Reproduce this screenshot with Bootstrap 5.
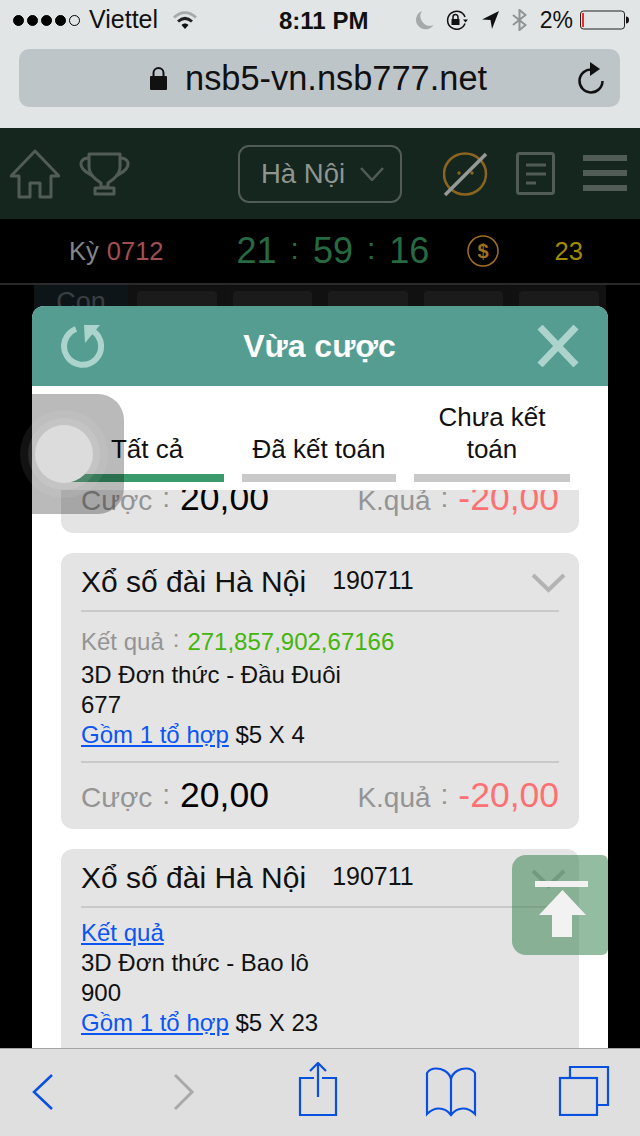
<!DOCTYPE html>
<html lang="vi">

<head>
  <meta charset="UTF-8">
  <meta name="viewport" content="width=device-width, initial-scale=1.0">
  <title>Vừa cược</title>
  <link href="https://cdn.jsdelivr.net/npm/bootstrap@5.3.6/dist/css/bootstrap.min.css" rel="stylesheet">
  <style>
    html, body { margin: 0; background: #000; }
    body, button { font-family: "Liberation Sans", Arial, sans-serif; }

    #phone { position: relative; width: 640px; height: 1136px; overflow: hidden; background: #000; }

    /* safari chrome */
    #chrome { height: 128px; background: #e1e5e5; flex: none; }
    #statusbar { height: 40px; padding: 0 11px 0 13px; font-size: 23px; color: #111; }
    .sig-dot { width: 11px; height: 11px; border-radius: 50%; background: #000; border: 1px solid #000; margin-right: 3px; }
    .sig-dot.off { background: transparent; }
    .carrier { margin-left: 6px; width: 83px; font-size: 25px; }
    .clock { font-weight: bold; position: absolute; left: 279px; top: 8px; font-size: 24px; line-height: 26px; }
    .pct { margin: 0 7px 0 13px; }
    .st-moon { margin-right: 11px; }
    .st-gap { margin-right: 12px; }
    #urlbar { margin: 9px 20px 0 19px; height: 58px; background: #bec5c9; border-radius: 10px; padding-left: 131px; padding-right: 15px; }
    .url-text { font-size: 34.4px; color: #111; margin-left: 18px; line-height: 58px; }

    /* app nav */
    #appnav { height: 91px; background: #14261d; flex: none; padding-left: 10px; }
    .city-box { margin-left: 108px; margin-right: 41px; width: 164px; height: 58px; border: 2px solid #525c57; border-radius: 11px; color: #8f9591; font-size: 27.5px; padding-left: 21px; flex: none; }
    .city-box svg { margin-left: 15px; }
    .ic-doc { margin: 0 28px 0 27px; }
    .ic-cup { margin-left: 19px; }
    .ic-menu { margin-bottom: 2px; }

    /* timer */
    #timerbar { height: 66px; background: #000; border-bottom: 2px solid #2b2b2b; flex: none; font-size: 25.5px; padding-left: 69px; }
    .ky { color: #868686; }
    .ky-no { color: #a04f50; margin-left: 8px; }
    .count { color: #266a42; font-size: 36px; margin-left: 73px; width: 195px; }
    .count-sep { position: relative; top: -4px; font-size: 30px; margin: 0 14px; }
    .coin { margin-left: 35px; }
    .credit { color: #a08c00; margin-left: 56px; }

    /* what shows behind the popup */
    #backrow { margin-left: 34px; width: 572px; height: 60px; background: #101010; gap: 2px; flex: none; }
    .back-cell { flex: 1; padding: 6px 7px 0; background: #111; }
    .back-cell span { display: block; height: 40px; background: #1b1b1b; border-radius: 4px; }
    .back-con { flex: none; width: 94px; background: #0e1518; color: #3a3f42; font-size: 27px; text-align: center; line-height: 30px; padding-top: 2px; }

    /* popup */
    #popup { position: absolute; left: 32px; top: 306px; width: 576px; height: 742px; background: #fff; border-radius: 12px 12px 0 0; overflow: hidden; }
    .popup-head { height: 80px; background: #549d90; padding: 0 29px 0 28px; color: #fff; }
    .popup-title { font-size: 32px; font-weight: bold; margin-right: 4px; }
    .tab-row { height: 104px; padding: 0 38px; gap: 18px; }
    .tab-item { width: 154px; font-size: 26px; line-height: 32px; color: #111; text-align: center; padding-bottom: 9px; border-bottom: 8px solid #c9c9c9; margin-bottom: 8px; }
    .tab-item.on { border-bottom-color: #3b9a6b; }
    .tab-item.wide { width: 156px; }
    .bet-list { height: 558px; overflow: hidden; padding: 0 29px; }
    .bet-card { background: #e4e4e4; border: 0; border-radius: 12px; margin-bottom: 20px; padding: 0 20px; color: #111; }
    .bet-card.scrolled { margin-top: -25px; }
    .bet-top { height: 59px; border-bottom: 2px solid #c9c9c9; font-size: 30px; padding-bottom: 1px; }
    .draw-no { font-size: 25px; margin-left: 26px; }
    .bet-top svg { position: absolute; right: 13px; top: 20px; }
    .bet-body { font-size: 24px; line-height: 30px; padding: 12px 0 11px; }
    .bet-body.plain { padding: 10px 0 30px; }
    .bet-body a { color: #0b55f5; }
    .line-first { line-height: 36px; }
    .grey-label { color: #949494; }
    .colon { position: relative; top: -3px; }
    .line-first .colon { margin: 0 8px 0 9px; }
    .win-no { color: #43b50c; }
    .bet-foot { height: 68px; border-top: 2px solid #c9c9c9; font-size: 28px; }
    .bet-card.scrolled .bet-foot { border-top: 0; }
    .big-val { font-size: 35.5px; color: #000; }
    .big-val.lose { color: #ff7073; }
    .bet-foot .colon { margin: 0 10px; }

    /* floating stuff */
    #assist { position: absolute; left: 4px; top: 394px; width: 120px; height: 120px; background: rgba(0, 0, 0, .27); border-radius: 26px; }
    #assist svg { position: absolute; left: 0; top: 0; }
    #totop { position: absolute; left: 512px; top: 855px; width: 96px; height: 100px; background: rgba(60, 133, 82, .55); border-radius: 14px 6px 6px 14px; }

    /* safari toolbar */
    #toolbar { position: relative; height: 88px; background: #dfdfdf; border-top: 1px solid #a5a5a5; flex: none; margin-top: auto; }
    #toolbar svg { position: absolute; }
    .tb-back { left: 31px; top: 24px; }
    .tb-next { left: 172px; top: 24px; }
    .tb-share { left: 298px; top: 13px; }
    .tb-book { left: 425px; top: 18px; }
    .tb-tabs { left: 558px; top: 17px; }
  </style>
</head>

<body>
  <div id="phone" class="d-flex flex-column">

    <!-- thanh trang thai + dia chi -->
    <div id="chrome">
      <div id="statusbar" class="d-flex align-items-center">
        <span class="sig-dot"></span><span class="sig-dot"></span><span class="sig-dot"></span><span class="sig-dot"></span><span class="sig-dot off"></span>
        <span class="carrier">Viettel</span>
        <svg width="26" height="20" viewBox="0 0 26 20" fill="none">
          <path d="M2 7.500C9 1 17 1 24 7.500" stroke="#a9abab" stroke-width="3"/>
          <path d="M6 11.500C10.500 7.500 15.500 7.500 20 11.500" stroke="#222" stroke-width="3"/>
          <path d="M9.500 15C11.500 13 14.500 13 16.500 15L13 19Z" fill="#111"/>
        </svg>
        <span class="clock">8:11 PM</span>
        <div class="ms-auto d-flex align-items-center">
          <svg class="st-moon" width="19" height="20" viewBox="0 0 19 20"><path d="M7 1A9.500 9.500 0 1 0 18.500 15 9.500 9.500 0 0 1 7 1Z" fill="#a6a9a9"/></svg>
          <svg class="st-gap" width="24" height="20" viewBox="0 0 24 20" fill="none">
            <path d="M20 13.500A9 9 0 1 1 20 7" stroke="#111" stroke-width="1.500"/>
            <path d="M18 9.500h5l-2.500 3z" fill="#111"/>
            <rect x="6.500" y="9" width="8" height="6" fill="#111"/>
            <path d="M8 9V7a2.500 2.500 0 0 1 5 0v2" stroke="#111" stroke-width="1.500"/>
          </svg>
          <svg class="st-gap" width="19" height="20" viewBox="0 0 19 20"><path d="M18 1 1 9.500 9.500 10 11 19Z" fill="#111"/></svg>
          <svg width="15" height="22" viewBox="0 0 15 22" fill="none"><path d="M1 6 13.500 16 7.500 21V1L13.500 6 1 16" stroke="#8f9393" stroke-width="2"/></svg>
          <span class="pct">2%</span>
          <svg width="49" height="20" viewBox="0 0 49 20" fill="none">
            <rect x=".5" y="1" width="44" height="18" rx="3" stroke="#222"/>
            <rect x="2" y="3" width="2" height="14" fill="#f02a2a"/>
            <path d="M46 6.500c2 0 3 1.500 3 3.500s-1 3.500-3 3.500z" fill="#111"/>
          </svg>
        </div>
      </div>
      <div id="urlbar" class="d-flex align-items-center">
        <svg width="17" height="23" viewBox="0 0 17 23" fill="none">
          <rect x="0" y="9" width="17" height="14" rx="1" fill="#111"/>
          <path d="M3.500 10V6a5 5 0 0 1 10 0v4" stroke="#111" stroke-width="2"/>
        </svg>
        <span class="url-text">nsb5-vn.nsb777.net</span>
        <svg class="ms-auto" width="28" height="32" viewBox="0 0 28 32" fill="none">
          <path d="M15 7.500A11.500 11.500 0 1 0 25.500 19" stroke="#111" stroke-width="2.500"/>
          <path d="M13 0 23 7 13 14Z" fill="#111"/>
        </svg>
      </div>
    </div>

    <!-- menu cua app -->
    <div id="appnav" class="d-flex align-items-center">
      <svg width="50" height="50" viewBox="0 0 50 50" fill="none" stroke="#525c57" stroke-width="3" stroke-linejoin="round">
        <path d="M25 2 49 27H41V48H30V34H20V48H9V27H1Z"/>
      </svg>
      <svg class="ic-cup" width="51" height="44" viewBox="0 0 51 44" fill="none" stroke="#525c57" stroke-width="3" stroke-linejoin="round">
        <path d="M10 2H41V14C41 24 33 28 29 31V35H22V31C18 28 10 24 10 14Z"/>
        <path d="M10 6C2 6 0 12 4 17 7 21 11 22 14 24M41 6C49 6 51 12 47 17 44 21 40 22 37 24"/>
        <rect x="16" y="36" width="19" height="6"/>
      </svg>
      <div class="city-box d-flex align-items-center">
        <span>Hà Nội</span>
        <svg width="24" height="14" viewBox="0 0 24 14" fill="none"><path d="M1 1 12 13 23 1" stroke="#525c57" stroke-width="2.500"/></svg>
      </div>
      <svg width="46" height="46" viewBox="0 0 46 46" fill="none">
        <ellipse cx="22" cy="23" rx="21" ry="20.500" stroke="#8a6420" stroke-width="2.500"/>
        <circle cx="16" cy="22" r="1.700" fill="#8a6420"/><circle cx="29" cy="22" r="1.700" fill="#8a6420"/>
        <path d="M2 44 43 3" stroke="#979997" stroke-width="3.500"/>
      </svg>
      <svg class="ic-doc" width="39" height="43" viewBox="0 0 39 43" fill="none" stroke="#525c57" stroke-width="3">
        <rect x="1.500" y="1.500" width="36" height="40" rx="2"/>
        <path d="M10 13H30M10 22H30M10 31H20"/>
      </svg>
      <svg class="ic-menu" width="44" height="36" viewBox="0 0 44 36" fill="#525c57">
        <rect width="44" height="6"/><rect y="15" width="44" height="6"/><rect y="30" width="44" height="6"/>
      </svg>
    </div>

    <!-- ky + dong ho -->
    <div id="timerbar" class="d-flex align-items-center">
      <span class="ky">Kỳ</span><span class="ky-no">0712</span>
      <span class="count text-nowrap">21<span class="count-sep">:</span>59<span class="count-sep">:</span>16</span>
      <svg class="coin" width="32" height="32" viewBox="0 0 32 32" fill="none">
        <circle cx="16" cy="16" r="15" stroke="#a2701c" stroke-width="1.500"/>
        <text x="16" y="23" text-anchor="middle" font-size="20" font-weight="bold" fill="#a2701c" font-family="Liberation Sans">$</text>
      </svg>
      <span class="credit">23</span>
    </div>

    <div id="backrow" class="d-flex">
      <div class="back-con">Con</div>
      <div class="back-cell"><span></span></div>
      <div class="back-cell"><span></span></div>
      <div class="back-cell"><span></span></div>
      <div class="back-cell"><span></span></div>
      <div class="back-cell"><span></span></div>
    </div>

    <!-- popup vua cuoc -->
    <div id="popup">
      <div class="popup-head d-flex align-items-center justify-content-between">
        <svg width="46" height="46" viewBox="0 0 46 46" fill="none">
          <path d="M16 6A18.500 18.500 0 1 0 33 8" stroke="#acd3cc" stroke-width="6"/>
          <path d="M24 2H40L25 20Z" fill="#acd3cc"/>
        </svg>
        <span class="popup-title">Vừa cược</span>
        <svg width="42" height="42" viewBox="0 0 42 42"><path d="M3 2 39 40M39 2 3 40" stroke="#acd3cc" stroke-width="7"/></svg>
      </div>

      <div class="tab-row d-flex align-items-end">
        <div class="tab-item on">Tất cả</div>
        <div class="tab-item">Đã kết toán</div>
        <div class="tab-item wide">Chưa kết toán</div>
      </div>

      <div class="bet-list">
        <div class="card bet-card scrolled">
          <div class="bet-foot d-flex align-items-center justify-content-between">
            <span><span class="grey-label">Cược<span class="colon">:</span></span><span class="big-val">20,00</span></span>
            <span><span class="grey-label">K.quả<span class="colon">:</span></span><span class="big-val lose">-20,00</span></span>
          </div>
        </div>

        <div class="card bet-card">
          <div class="bet-top d-flex align-items-center">
            <span>Xổ số đài Hà Nội</span><span class="draw-no">190711</span>
            <svg width="35" height="20" viewBox="0 0 35 20" fill="none"><path d="M2 2 17.500 17 33 2" stroke="#b3b3b3" stroke-width="4"/></svg>
          </div>
          <div class="bet-body">
            <div class="line-first"><span class="grey-label">Kết quả<span class="colon">:</span></span><span class="win-no">271,857,902,67166</span></div>
            <div>3D Đơn thức - Đầu Đuôi</div>
            <div>677</div>
            <div><a href="#">Gồm 1 tổ hợp</a> $5 X 4</div>
          </div>
          <div class="bet-foot d-flex align-items-center justify-content-between">
            <span><span class="grey-label">Cược<span class="colon">:</span></span><span class="big-val">20,00</span></span>
            <span><span class="grey-label">K.quả<span class="colon">:</span></span><span class="big-val lose">-20,00</span></span>
          </div>
        </div>

        <div class="card bet-card">
          <div class="bet-top d-flex align-items-center">
            <span>Xổ số đài Hà Nội</span><span class="draw-no">190711</span>
            <svg width="35" height="20" viewBox="0 0 35 20" fill="none"><path d="M2 2 17.500 17 33 2" stroke="#b3b3b3" stroke-width="4"/></svg>
          </div>
          <div class="bet-body plain">
            <div><a href="#">Kết quả</a></div>
            <div>3D Đơn thức - Bao lô</div>
            <div>900</div>
            <div><a href="#">Gồm 1 tổ hợp</a> $5 X 23</div>
          </div>
        </div>
      </div>
    </div>

    <!-- nut noi -->
    <div id="assist">
      <svg width="120" height="120" viewBox="0 0 120 120" fill="none">
        <circle cx="60" cy="60" r="44" fill="rgba(255,255,255,.07)"/>
        <circle cx="60" cy="60" r="36" fill="rgba(255,255,255,.1)"/>
        <circle cx="60" cy="60" r="29" fill="#dcdcdc"/>
      </svg>
    </div>
    <div id="totop">
      <svg width="96" height="100" viewBox="0 0 96 100" fill="#f2f2f2">
        <rect x="23" y="26" width="53" height="6"/>
        <path d="M50.500 35 74 60H60V82H40V60H27Z"/>
      </svg>
    </div>

    <!-- thanh duoi safari -->
    <div id="toolbar">
      <svg class="tb-back" width="24" height="38" viewBox="0 0 24 38" fill="none"><path d="M21 2 3 19 21 36" stroke="#0a50e0" stroke-width="2.500"/></svg>
      <svg class="tb-next" width="24" height="38" viewBox="0 0 24 38" fill="none"><path d="M3 2 20 19 3 36" stroke="#a9a9a9" stroke-width="3"/></svg>
      <svg class="tb-share" width="40" height="56" viewBox="0 0 40 56" fill="none" stroke="#0a50e0" stroke-width="2.200">
        <path d="M16 16H2V53H38V16H24M20 35V1M12 9 20 1 28 9"/>
      </svg>
      <svg class="tb-book" width="52" height="50" viewBox="0 0 52 50" fill="none" stroke="#0a50e0" stroke-width="2.200">
        <path d="M26 48V12C24 4 16 1.500 11 1.500 7 1.500 4 3 2 6V47C6 43 10 41.500 14 41.500 19 41.500 23 44 26 48 29 44 33 41.500 38 41.500 42 41.500 46 43 50 47V6C48 3 45 1.500 41 1.500 36 1.500 28 4 26 12"/>
      </svg>
      <svg class="tb-tabs" width="52" height="50" viewBox="0 0 52 50" fill="none" stroke="#0a50e0" stroke-width="2.200">
        <rect x="2" y="12" width="37" height="37"/>
        <path d="M12 12V1H50V39H39"/>
      </svg>
    </div>
  </div>

  <script src="https://cdn.jsdelivr.net/npm/bootstrap@5.3.6/dist/js/bootstrap.bundle.min.js"></script>
</body>

</html>
